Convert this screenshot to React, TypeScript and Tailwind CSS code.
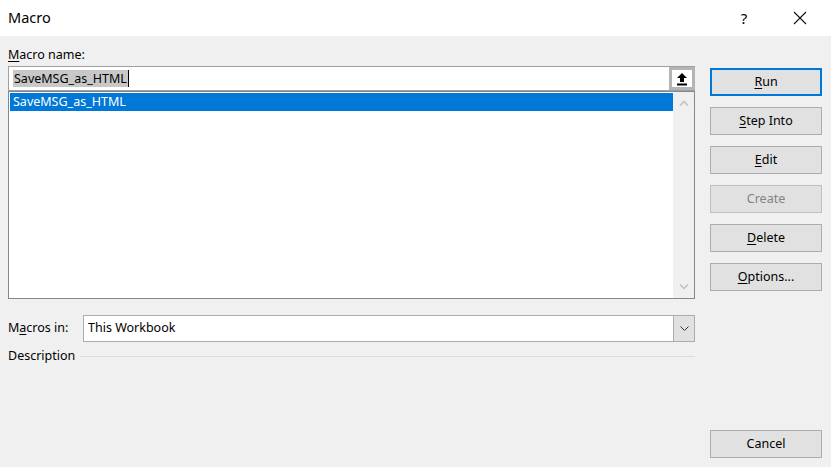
import React from "react";

const BUTTONS: { label: string; key: string; rest: string; disabled?: boolean; primary?: boolean }[] = [
  { label: "Run", key: "R", rest: "un", primary: true },
  { label: "Step Into", key: "S", rest: "tep Into" },
  { label: "Edit", key: "E", rest: "dit" },
  { label: "Create", key: "", rest: "Create", disabled: true },
  { label: "Delete", key: "D", rest: "elete" },
  { label: "Options...", key: "O", rest: "ptions..." },
];

function DialogButton({
  k,
  rest,
  disabled,
  primary,
}: {
  k: string;
  rest: string;
  disabled?: boolean;
  primary?: boolean;
}) {
  return (
    <button
      type="button"
      className={`h-[28px] w-full flex items-center justify-center bg-[#e1e1e1] ${
        primary ? "border-2 border-[#0078d7]" : "border border-[#adadad]"
      } ${disabled ? "text-[#838383] border-[#bfbfbf] bg-[#cccccc]/40" : "text-black"}`}
    >
      {k && <span className="underline underline-offset-2">{k}</span>}
      {rest}
    </button>
  );
}

export default function App() {
  return (
    <div
      className="w-[831px] h-[467px] bg-[#f0f0f0] flex flex-col text-[12.5px] text-black"
      style={{ fontFamily: '"Noto Sans", "Open Sans", sans-serif' }}
    >
      {/* title bar */}
      <div className="h-[36px] bg-white flex items-center">
        <span className="pl-[8px] text-[14.5px]">Macro</span>
        <div className="ml-auto flex items-center h-full">
          <span className="w-[46px] mr-[10px] text-center text-[15px]">?</span>
          <span className="w-[46px] mr-[8px] flex justify-center">
            <svg width="14" height="14" viewBox="0 0 14 14">
              <path d="M1 1L13 13M13 1L1 13" stroke="#111" strokeWidth="1.1" />
            </svg>
          </span>
        </div>
      </div>

      {/* body */}
      <div className="flex flex-1 px-[8px] gap-[15px]">
        {/* left column */}
        <div className="w-[687px] flex flex-col">
          <div className="mt-[10px] h-[18px] leading-[18px]">
            <span className="underline underline-offset-2">M</span>acro name:
          </div>
          <div className="mt-[2px] h-[25px] bg-white border border-[#a0a0a0] flex items-center">
            <div className="flex-1 pl-[4px] flex items-center">
              <span className="bg-[#c8c8c8] leading-[17px] px-[1px]">SaveMSG_as_HTML</span>
              <span className="w-px h-[17px] bg-black" />
            </div>
            <div className="w-[26px] h-full bg-[#b4b4b4] p-[3px] -mr-px">
              <div className="bg-white w-full h-full flex items-center justify-center">
                <svg width="12" height="14" viewBox="0 0 12 14">
                  <path d="M6 1L11 6H8V10H4V6H1Z" fill="#000" />
                  <rect x="1" y="11.5" width="10" height="2" fill="#000" />
                </svg>
              </div>
            </div>
          </div>
          <div className="h-[208px] bg-white border border-[#828790] flex">
            <div className="flex-1 pt-[1px] pl-px">
              <div className="h-[18px] bg-[#0078d7] text-white pl-[3px] leading-[18px]">SaveMSG_as_HTML</div>
            </div>
            <div className="w-[21px] bg-[#f0f0f0] flex flex-col items-center justify-between py-[8px]">
              <svg width="10" height="6" viewBox="0 0 10 6">
                <path d="M1 5.5L5 1.5L9 5.5" stroke="#c2c2c2" strokeWidth="1.6" fill="none" />
              </svg>
              <svg width="10" height="6" viewBox="0 0 10 6">
                <path d="M1 0.5L5 4.5L9 0.5" stroke="#c2c2c2" strokeWidth="1.6" fill="none" />
              </svg>
            </div>
          </div>

          <div className="mt-[16px] flex items-center">
            <span className="w-[75px]">
              M<span className="underline underline-offset-2">a</span>cros in:
            </span>
            <div className="flex-1 h-[27px] bg-white border border-[#adadad] flex items-center">
              <span className="flex-1 pl-[4px]">This Workbook</span>
              <div className="w-[21px] h-full bg-[#e1e1e1] border-l border-[#adadad] flex items-center justify-center">
                <svg width="9" height="5" viewBox="0 0 9 5">
                  <path d="M0.5 0.5L4.5 4.5L8.5 0.5" stroke="#333" strokeWidth="1" fill="none" />
                </svg>
              </div>
            </div>
          </div>

          <div className="mt-[5px] flex items-center gap-[5px]">
            <span>Description</span>
            <div className="flex-1 h-px bg-[#dcdcdc]" />
          </div>
        </div>

        {/* right column */}
        <div className="w-[112px] flex flex-col pt-[32px]">
          <div className="flex flex-col gap-[11px]">
            {BUTTONS.map((b) => (
              <DialogButton key={b.label} k={b.key} rest={b.rest} disabled={b.disabled} primary={b.primary} />
            ))}
          </div>
          <div className="mt-auto mb-[9px]">
            <DialogButton k="" rest="Cancel" />
          </div>
        </div>
      </div>
    </div>
  );
}
